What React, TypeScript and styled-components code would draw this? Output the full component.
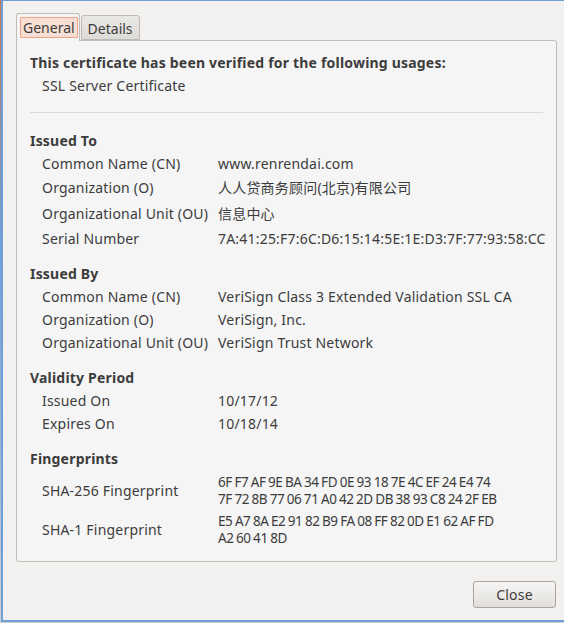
import React from "react";
import styled, { createGlobalStyle } from "styled-components";

const GlobalStyle = createGlobalStyle`
  html, body { margin: 0; padding: 0; background: #ffffff; }
  body { font-family: "Noto Sans", "Noto Sans CJK SC", sans-serif; }
  * { box-sizing: border-box; }
`;

const Frame = styled.div`
  width: 564px;
  height: 623px;
  padding-left: 1px;
  background: linear-gradient(#c87a4a, #6f9fd8 40%, #d0d0d0);
`;

const Window = styled.div`
  height: 622px;
  background: #f2f1f0;
  border-top: 1px solid #6f9fd8;
  border-left: 2px solid #6f9fd8;
  border-bottom: 2px solid #6f9fd8;
  padding: 12px 7px 0 13px;
  display: flex;
  flex-direction: column;
  color: #3c3c3c;
  font-size: 14px;
  letter-spacing: 0.2px;
`;

const TabBar = styled.div`
  display: flex;
  align-items: flex-end;
  gap: 1px;
  height: 27px;
  position: relative;
  z-index: 1;
`;

const Tab = styled.div<{ $active?: boolean }>`
  height: ${(p) => (p.$active ? "28px" : "25px")};
  margin-bottom: ${(p) => (p.$active ? "-1px" : "0")};
  border: 1px solid ${(p) => (p.$active ? "#c0bdb8" : "#bcb9b4")};
  border-bottom: ${(p) => (p.$active ? "none" : "1px solid #bcb9b4")};
  border-radius: 3px 3px 0 0;
  background: ${(p) =>
    p.$active ? "#f5f5f5" : "linear-gradient(#ebe9e6, #dedcd8)"};
  padding: ${(p) => (p.$active ? "3px 1px 0 3px" : "2px 3px 0 3px")};
  display: flex;
  align-items: flex-start;
`;

const TabLabel = styled.span<{ $focus?: boolean }>`
  display: block;
  padding: 0 2px;
  line-height: 19px;
  letter-spacing: 0;
  border: 1px solid ${(p) => (p.$focus ? "#f0a284" : "transparent")};
  background: ${(p) => (p.$focus ? "#f8dfd3" : "transparent")};
  border-radius: 1px;
`;

const Panel = styled.div`
  width: 541px;
  height: 522px;
  background: #f5f5f5;
  border: 1px solid #c0bdb8;
  border-radius: 0 3px 3px 3px;
  padding: 12px 0 0 13px;
`;

const Title = styled.div`
  font-weight: bold;
  line-height: 20px;
`;

const Usage = styled.div`
  padding-left: 12px;
  line-height: 20px;
  margin-top: 3px;
`;

const Separator = styled.div`
  height: 1px;
  background: #dcdad7;
  margin: 16px 13px 18px 0;
`;

const Section = styled.div`
  margin-bottom: 14px;
`;

const Heading = styled.div`
  font-weight: bold;
  line-height: 20px;
  margin-bottom: 1px;
`;

const Row = styled.div<{ $h?: number }>`
  display: grid;
  grid-template-columns: 176px 1fr;
  padding-left: 12px;
  height: ${(p) => p.$h ?? 23}px;
  align-items: center;
`;

const Label = styled.span`
  line-height: 20px;
`;

const Value = styled.span`
  line-height: 18px;
  white-space: nowrap;
`;

const HexBlock = styled.div`
  display: flex;
  flex-direction: column;
`;

const HexLine = styled.div`
  height: 17px;
  line-height: 17px;
  font-size: 13.5px;
  letter-spacing: -0.45px;
  word-spacing: -0.5px;
  white-space: nowrap;
`;

const Footer = styled.div`
  display: flex;
  justify-content: flex-end;
  padding-top: 19px;
  padding-right: 1px;
`;

const Button = styled.button`
  width: 83px;
  height: 27px;
  border: 1px solid #a9a6a1;
  border-radius: 3px;
  background: linear-gradient(#f6f5f4, #e1dfdc);
  color: #3c3c3c;
  font-family: inherit;
  font-size: 14px;
  letter-spacing: 0.2px;
  padding: 0;
`;

const rowsTo = [
  ["Common Name (CN)", "www.renrendai.com", 24],
  ["Organization (O)", "人人贷商务顾问(北京)有限公司", 24],
  ["Organizational Unit (OU)", "信息中心", 28],
  ["Serial Number", "7A:41:25:F7:6C:D6:15:14:5E:1E:D3:7F:77:93:58:CC", 22],
] as const;

const rowsBy = [
  ["Common Name (CN)", "VeriSign Class 3 Extended Validation SSL CA"],
  ["Organization (O)", "VeriSign, Inc."],
  ["Organizational Unit (OU)", "VeriSign Trust Network"],
] as const;

const fingerprints = [
  {
    label: "SHA-256 Fingerprint",
    h: 42,
    lines: [
      "6F F7 AF 9E BA 34 FD 0E 93 18 7E 4C EF 24 E4 74",
      "7F 72 8B 77 06 71 A0 42 2D DB 38 93 C8 24 2F EB",
    ],
  },
  {
    label: "SHA-1 Fingerprint",
    h: 36,
    lines: ["E5 A7 8A E2 91 82 B9 FA 08 FF 82 0D E1 62 AF FD", "A2 60 41 8D"],
  },
];

export default function App() {
  return (
    <>
      <GlobalStyle />
      <Frame>
        <Window>
          <TabBar>
            <Tab $active>
              <TabLabel $focus>General</TabLabel>
            </Tab>
            <Tab>
              <TabLabel>Details</TabLabel>
            </Tab>
          </TabBar>
          <Panel>
            <Title>This certificate has been verified for the following usages:</Title>
            <Usage>SSL Server Certificate</Usage>
            <Separator />
            <Section>
              <Heading>Issued To</Heading>
              {rowsTo.map(([l, v, h]) => (
                <Row key={l} $h={h}>
                  <Label>{l}</Label>
                  <Value>{v}</Value>
                </Row>
              ))}
            </Section>
            <Section>
              <Heading>Issued By</Heading>
              {rowsBy.map(([l, v]) => (
                <Row key={l}>
                  <Label>{l}</Label>
                  <Value>{v}</Value>
                </Row>
              ))}
            </Section>
            <Section>
              <Heading>Validity Period</Heading>
              <Row>
                <Label>Issued On</Label>
                <Value>10/17/12</Value>
              </Row>
              <Row>
                <Label>Expires On</Label>
                <Value>10/18/14</Value>
              </Row>
            </Section>
            <Section>
              <Heading>Fingerprints</Heading>
              {fingerprints.map((f) => (
                <Row key={f.label} $h={f.h}>
                  <Label>{f.label}</Label>
                  <HexBlock>
                    {f.lines.map((line) => (
                      <HexLine key={line}>{line}</HexLine>
                    ))}
                  </HexBlock>
                </Row>
              ))}
            </Section>
          </Panel>
          <Footer>
            <Button>Close</Button>
          </Footer>
        </Window>
      </Frame>
    </>
  );
}
